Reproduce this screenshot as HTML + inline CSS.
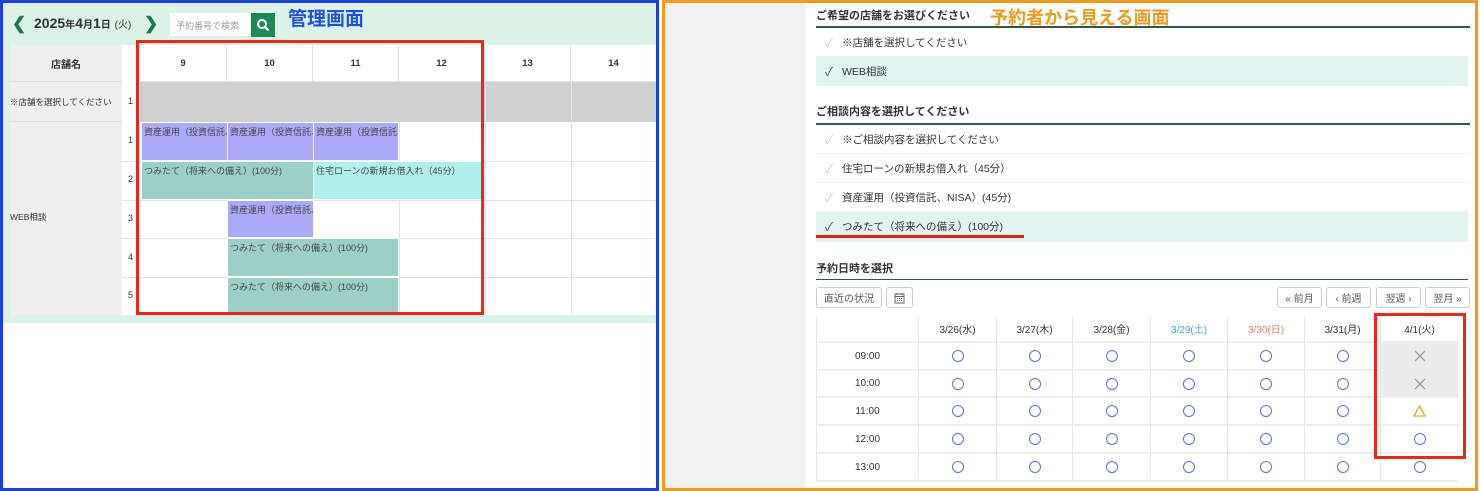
<!DOCTYPE html>
<html><head><meta charset="utf-8"><style>
*{box-sizing:border-box;margin:0;padding:0}
body{width:1480px;height:491px;position:relative;background:#fff;font-family:"Liberation Sans","Noto Sans CJK JP",sans-serif;overflow:hidden;color:#333}
.a{position:absolute}
.c{display:flex;align-items:center;justify-content:center}
.cell{position:absolute;border-right:1px solid #e3e3e3;border-bottom:1px solid #e3e3e3}
.ev{position:absolute;font-size:9px;color:#444;padding:2px 2px;white-space:nowrap;overflow:hidden;border:1px solid #fff}
.pu{background:#aaaaf8}.tl{background:#9ccfc8}.cy{background:#b0f0ec}
.opt{position:absolute;left:816px;width:652px;font-size:10.5px;color:#333;display:flex;align-items:center;border-bottom:1px solid #eee}
.opt span.k{color:#ccc;width:26px;text-align:center;font-size:12px}
.opt.sel{background:#e0f4f0}.opt.sel span.k{color:#555}
.btn{position:absolute;top:287px;height:21px;border:1px solid #ccc;border-radius:3px;font-size:10px;color:#555;display:flex;align-items:center;justify-content:center;background:#fff}
.ring{display:inline-block;width:12px;height:12px;border:1.5px solid #5577cc;border-radius:50%}
</style></head><body>
<!-- LEFT PANEL -->
<div class="a" style="left:0;top:0;width:660px;height:491px;background:#fff"></div>
<div class="a" style="left:3px;top:3px;width:654px;height:320px;background:#dcf1e8"></div>
<div class="a" style="left:12px;top:14px;font-size:17px;color:#1c7a4c;font-weight:bold">&#10094;</div>
<div class="a" style="left:34px;top:15px;font-size:14px;font-weight:bold;color:#333">2025<span style="font-size:10px">年</span>4<span style="font-size:10px">月</span>1<span style="font-size:10px">日</span> <span style="font-size:10px;font-weight:normal">(火)</span></div>
<div class="a" style="left:144px;top:14px;font-size:17px;color:#1c7a4c;font-weight:bold">&#10095;</div>
<div class="a" style="left:170px;top:13px;width:80px;height:23px;background:#fff;font-size:9px;color:#999;padding:6px 6px">予約番号で検索</div>
<div class="a c" style="left:251px;top:13px;width:24px;height:24px;background:#1e8a55"><svg width="14" height="14" viewBox="0 0 14 14"><circle cx="6" cy="6" r="4" fill="none" stroke="#fff" stroke-width="2"/><path d="M9 9l3.5 3.5" stroke="#fff" stroke-width="2.2"/></svg></div>
<div class="a" style="left:288px;top:4px;font-size:19px;font-weight:bold;color:#1f4fe0">管理画面</div>
<!-- table -->
<div class="a" style="left:10px;top:45px;width:647px;height:270px;background:#fff"></div>
<div class="a c" style="left:10px;top:45px;width:112px;height:270px;background:#efefef"></div>
<div class="a c" style="left:10px;top:45px;width:112px;height:37px;font-size:10px;font-weight:bold;border-bottom:1px solid #ddd">店舗名</div>
<div class="a" style="left:10px;top:82px;width:112px;height:40px;font-size:8.5px;padding-top:14px;border-bottom:1px solid #ddd">※店舗を選択してください</div>
<div class="a" style="left:10px;top:211px;font-size:8.5px">WEB相談</div>
<div class="a" style="left:128px;top:96px;font-size:9px">1</div>
<div class="a" style="left:128px;top:135px;font-size:9px">1</div>
<div class="a" style="left:128px;top:174px;font-size:9px">2</div>
<div class="a" style="left:128px;top:213px;font-size:9px">3</div>
<div class="a" style="left:128px;top:252px;font-size:9px">4</div>
<div class="a" style="left:128px;top:290px;font-size:9px">5</div>
<div class="a" style="left:140px;top:82px;width:517px;height:40px;background:#d0d0d0"></div>
<div class="cell c" style="left:140px;top:45px;width:87px;height:37px;font-size:9.5px;font-weight:bold">9</div>
<div class="cell c" style="left:227px;top:45px;width:86px;height:37px;font-size:9.5px;font-weight:bold">10</div>
<div class="cell c" style="left:313px;top:45px;width:86px;height:37px;font-size:9.5px;font-weight:bold">11</div>
<div class="cell c" style="left:399px;top:45px;width:86px;height:37px;font-size:9.5px;font-weight:bold">12</div>
<div class="cell c" style="left:485px;top:45px;width:86px;height:37px;font-size:9.5px;font-weight:bold">13</div>
<div class="cell c" style="left:571px;top:45px;width:86px;height:37px;font-size:9.5px;font-weight:bold">14</div>
<div class="a" style="left:122px;top:161px;width:535px;border-top:1px solid #e3e3e3"></div>
<div class="a" style="left:122px;top:200px;width:535px;border-top:1px solid #e3e3e3"></div>
<div class="a" style="left:122px;top:238px;width:535px;border-top:1px solid #e3e3e3"></div>
<div class="a" style="left:122px;top:277px;width:535px;border-top:1px solid #e3e3e3"></div>
<div class="a" style="left:399px;top:122px;height:193px;border-left:1px solid #e3e3e3"></div>
<div class="a" style="left:485px;top:82px;height:233px;border-left:1px solid #e3e3e3"></div>
<div class="a" style="left:571px;top:82px;height:233px;border-left:1px solid #e3e3e3"></div>
<div class="a" style="left:227px;top:122px;height:193px;border-left:1px solid #e3e3e3"></div>
<div class="a" style="left:313px;top:122px;height:193px;border-left:1px solid #e3e3e3"></div>
<div class="ev pu" style="left:141px;top:122px;width:87px;height:39px">資産運用（投資信託、</div>
<div class="ev pu" style="left:227px;top:122px;width:87px;height:39px">資産運用（投資信託、</div>
<div class="ev pu" style="left:313px;top:122px;width:86px;height:39px">資産運用（投資信託、</div>
<div class="ev tl" style="left:141px;top:161px;width:173px;height:39px">つみたて（将来への備え）(100分)</div>
<div class="ev cy" style="left:313px;top:161px;width:172px;height:39px">住宅ローンの新規お借入れ（45分）</div>
<div class="ev pu" style="left:227px;top:200px;width:87px;height:38px">資産運用（投資信託、</div>
<div class="ev tl" style="left:227px;top:238px;width:172px;height:39px">つみたて（将来への備え）(100分)</div>
<div class="ev tl" style="left:227px;top:277px;width:172px;height:38px">つみたて（将来への備え）(100分)</div>
<div class="a" style="left:136px;top:40px;width:348px;height:275px;border:3px solid #e8291b"></div>
<div class="a" style="left:0;top:0;width:659px;height:491px;border:3px solid #1a3fe0"></div>

<!-- RIGHT PANEL -->
<div class="a" style="left:664px;top:0;width:142px;height:491px;background:#f1f1f1"></div>
<div class="a" style="left:816px;top:7px;font-size:11px;font-weight:bold">ご希望の店舗をお選びください</div>
<div class="a" style="left:990px;top:4px;font-size:18px;font-weight:bold;color:#f19a22">予約者から見える画面</div>
<div class="a" style="left:816px;top:26px;width:654px;border-top:2px solid #2f5a48"></div>
<div class="opt" style="top:28px;height:29px"><span class="k">✓</span>※店舗を選択してください</div>
<div class="opt sel" style="top:57px;height:29px"><span class="k">✓</span>WEB相談</div>
<div class="a" style="left:816px;top:103px;font-size:11px;font-weight:bold">ご相談内容を選択してください</div>
<div class="a" style="left:816px;top:123px;width:654px;border-top:2px solid #2f5a48"></div>
<div class="opt" style="top:125px;height:29px"><span class="k">✓</span>※ご相談内容を選択してください</div>
<div class="opt" style="top:154px;height:29px"><span class="k">✓</span>住宅ローンの新規お借入れ（45分）</div>
<div class="opt" style="top:183px;height:29px"><span class="k">✓</span>資産運用（投資信託、NISA）(45分)</div>
<div class="opt sel" style="top:212px;height:30px"><span class="k">✓</span>つみたて（将来への備え）(100分)</div>
<div class="a" style="left:816px;top:235px;width:208px;height:3px;background:#e02020"></div>
<div class="a" style="left:816px;top:260px;font-size:11px;font-weight:bold">予約日時を選択</div>
<div class="a" style="left:816px;top:279px;width:652px;border-top:1.5px solid #2f5a48"></div>
<div class="btn" style="left:816px;width:66px">直近の状況</div>
<div class="btn" style="left:886px;width:27px"><svg width="11" height="12" viewBox="0 0 11 12"><rect x="1" y="2" width="9" height="9" fill="none" stroke="#666"/><path d="M1 4.5h9M3 1v2M8 1v2M3 6.5h1M5 6.5h1M7 6.5h1M3 8.5h1M5 8.5h1M7 8.5h1" stroke="#666"/></svg></div>
<div class="btn" style="left:1277px;width:45px">« 前月</div>
<div class="btn" style="left:1326px;width:45px">‹ 前週</div>
<div class="btn" style="left:1376px;width:45px">翌週 ›</div>
<div class="btn" style="left:1425px;width:45px">翌月 »</div>
<div id="rt"></div>
<div class="a" style="left:1374px;top:313px;width:92px;height:146px;border:3px solid #e8291b"></div>
<div class="a" style="left:662px;top:0;width:816px;height:491px;border:3px solid #f39a1a"></div>
<script>
var xs=[816,918,996,1072,1150,1227,1304,1380,1458];
var hd=["","3/26(水)","3/27(木)","3/28(金)","3/29(土)","3/30(日)","3/31(月)","4/1(火)"];
var col=["","#333","#333","#333","#3aa9d0","#e8826a","#333","#333"];
var tm=["09:00","10:00","11:00","12:00","13:00"];
var ys=[316,343,371,398,426,454,482];
var h="";
for(var r=0;r<6;r++){for(var c=0;c<8;c++){
var x=xs[c],w=xs[c+1]-x,y=ys[r],hh=ys[r+1]-y;var t="",st="color:#333;font-size:10px;";var bg="#fff";
if(r==0){t=hd[c];st="color:"+col[c]+";font-size:10px;"}
else if(c==0){t=tm[r-1]}
else if(c==7&&r<=2){t='<svg width="12" height="12" viewBox="0 0 12 12"><path d="M1 1L11 11M11 1L1 11" stroke="#999" stroke-width="1.3"/></svg>';bg="#ececec"}
else if(c==7&&r==3){t='<svg width="13" height="12" viewBox="0 0 13 12"><path d="M6.5 1L12 11H1Z" fill="none" stroke="#e8a33a" stroke-width="1.3"/></svg>'}
else{t='<span class="ring"></span>'}
h+='<div class="a c" style="left:'+x+'px;top:'+y+'px;width:'+w+'px;height:'+hh+'px;background:'+bg+';border-left:1px solid #e6e6e6;border-bottom:2px solid #eee;'+st+'">'+t+'</div>';}}
document.getElementById("rt").innerHTML=h;
</script>
</body></html>
